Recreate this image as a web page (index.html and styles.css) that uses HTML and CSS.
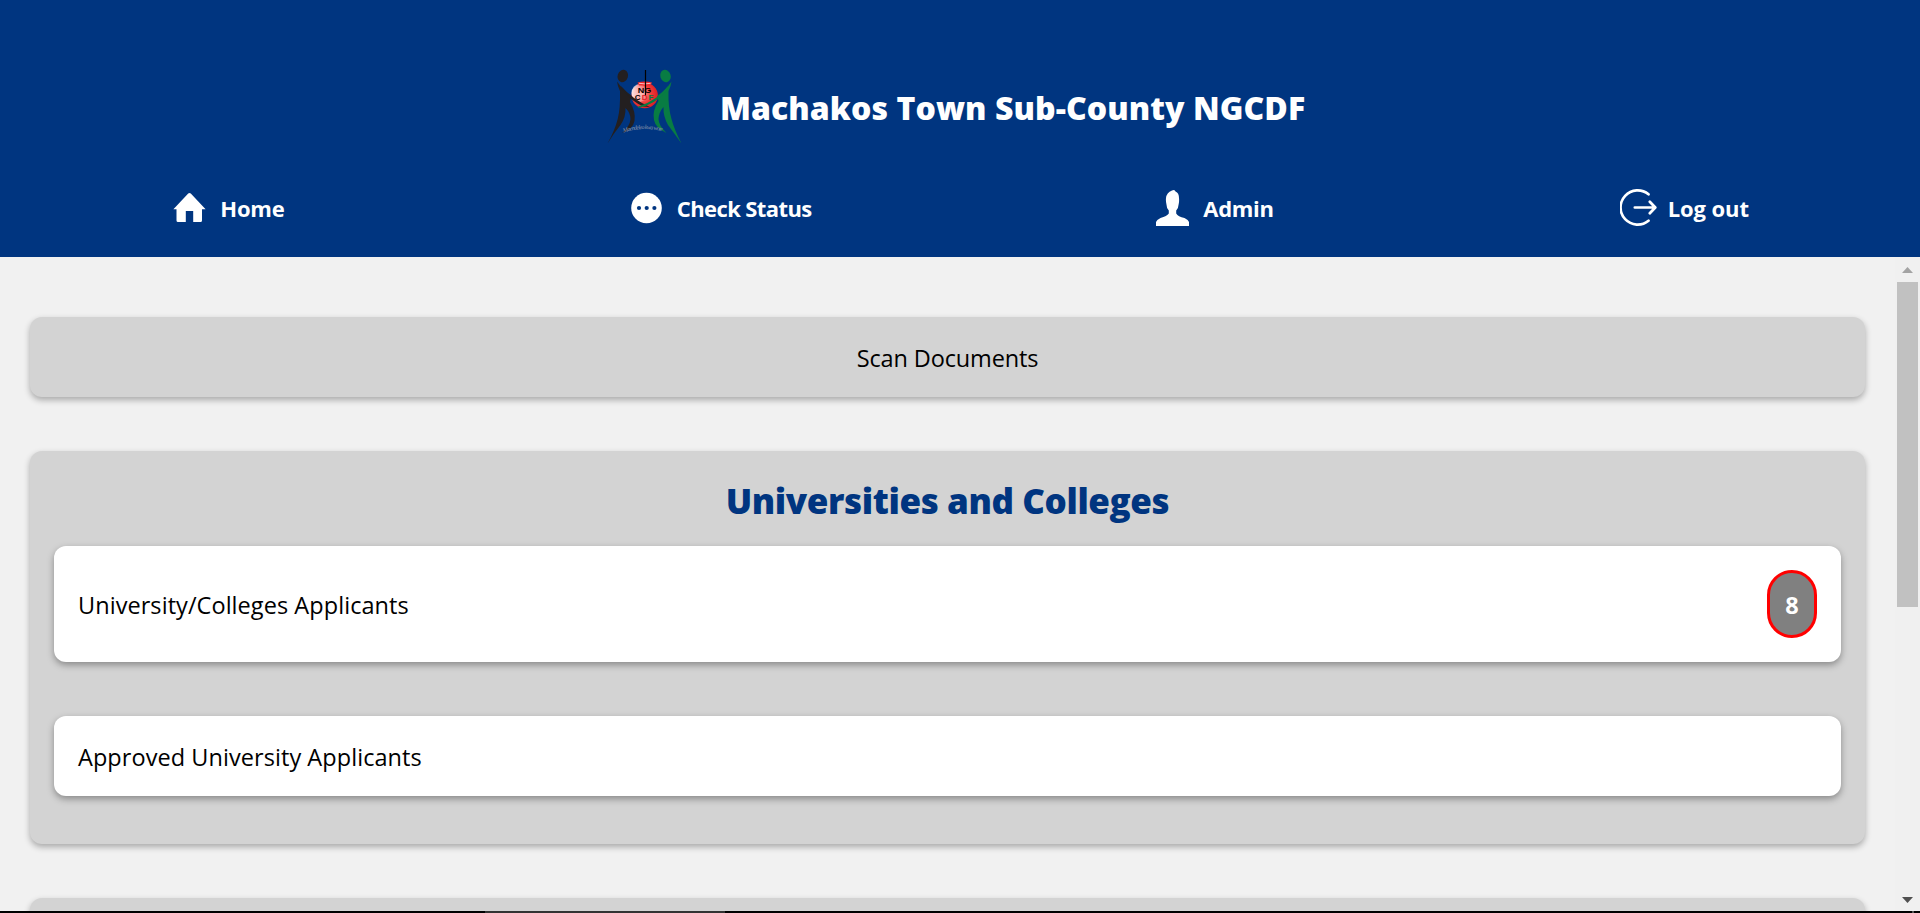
FILE: index.html
```html
<!DOCTYPE html>
<html lang="en">
<head>
<meta charset="utf-8">
<title>Machakos Town Sub-County NGCDF</title>
<link rel="stylesheet" href="styles.css">
</head>
<body>
<header class="header">
  <div class="brand">
    <svg class="logo" viewBox="0 0 120 110" aria-hidden="true">
      <defs>
        <radialGradient id="pot" cx=".4" cy=".45" r=".65">
          <stop offset="0" stop-color="#ff9a90"/><stop offset=".55" stop-color="#f03a38"/><stop offset="1" stop-color="#d81820"/>
        </radialGradient>
        <linearGradient id="shine"><stop offset="0" stop-color="#fff" stop-opacity=".9"/><stop offset="1" stop-color="#fff" stop-opacity="0"/></linearGradient>
      </defs>
      <ellipse cx="54.7" cy="45.5" rx="13.2" ry="12.8" fill="url(#pot)"/>
      <ellipse cx="49.5" cy="43" rx="8" ry="9" fill="url(#shine)"/>
      <path d="M47.5 32.5q7-2 14.500 0l-1.500 3h-11.500z" fill="#ef2a2c"/>
      <path d="M49 33.300q6 1.200 11.500 0" stroke="#fff" stroke-width=".7" fill="none"/>
      <path d="M55.500 20v26" stroke="#000" stroke-width="1.200"/>
      <g fill="#231f20">
        <ellipse cx="32.800" cy="26" rx="5.200" ry="6.300" transform="rotate(18 32.800 26)"/>
        <path d="M27 31.500Q33 40 41.500 46L40 52Q46 62 44.500 71Q43 79 32 83Q40 76 40.500 69Q40.500 63 35.500 58Q36 67 30.500 75Q24 83 17.500 93.500Q25 80 27.700 69Q30.500 58 30 41Q27.500 36 27 31.500Z"/>
        <path d="M31 36Q42 49 60 57L53.500 56.500Q42 52 32 39Z"/>
      </g>
      <g fill="#087c43">
        <ellipse cx="75.500" cy="26" rx="5.200" ry="6.300" transform="rotate(-18 75.500 26)"/>
        <path d="M81.500 31.500Q76 40 67 46L68.500 51Q62 61 64 70Q65.500 78 76.500 83Q68.500 75 68.500 69Q69 62 73.500 57Q73 66 78 75Q84 83 91.500 93.500Q84 79 81.500 69Q78 57 78.500 41Q81 36 81.500 31.500Z"/>
        <path d="M78 36Q68 50 48.500 56.500L48 58Q65 55 77 40Z"/>
      </g>
      <g class="logo-letters">
        <text x="47.800" y="43.300" textLength="13.500" lengthAdjust="spacingAndGlyphs">NG</text>
        <text x="44.800" y="49.500">C</text>
        <text x="51.800" y="49.500" fill="#e4212b">D</text>
        <text x="58.600" y="49.500" fill="#087c43">F</text>
      </g>
      <path id="motto-line" d="M33.500 82.500Q53 76 73.500 81.500" fill="none"/>
      <text class="logo-motto"><textPath href="#motto-line" textLength="39.500">Maendeleo kwa wote</textPath></text>
    </svg>
    <h1 class="title">Machakos Town Sub-County NGCDF</h1>
  </div>
  <nav class="nav">
    <a class="nav-item nav-home"><svg class="icon" viewBox="0 0 33 36"><path d="M15.200 3.400q1.300-1 2.600 0L32.600 19.200H29V30.500q0 1.500-1.500 1.500H20.200V21H12.800V32H5q-1.500 0-1.500-1.500V19.200H.400Z" fill="#fff"/></svg><span>Home</span></a>
    <a class="nav-item nav-status"><svg class="icon" viewBox="0 0 33 36"><circle cx="16.500" cy="18" r="15.300" fill="#fff"/><circle class="dot" cx="9" cy="18" r="2.100"/><circle class="dot" cx="16.700" cy="18" r="2.100"/><circle class="dot" cx="24.400" cy="18" r="2.100"/></svg><span>Check Status</span></a>
    <a class="nav-item nav-admin"><svg class="icon" viewBox="0 0 33 36"><path d="M0 36V32Q.500 29.800 4.500 28Q11 26 12.800 23.500V20.500Q10.500 18 10.300 13.500Q9.700 11 10 8Q10.500 2.800 16 .500Q19-.700 19.500 1.600Q23 3 23 8Q23.300 11 22.800 13.500Q22.500 18 20.200 20.500V23.500Q22 26.500 28.500 28Q32.500 29.800 33 32V36Z" fill="#fff"/></svg><span>Admin</span></a>
    <a class="nav-item nav-logout"><svg class="icon icon-wide" viewBox="0 0 37 37"><path d="M28.500 5.300A17.100 17.100 0 1 0 28.500 31.700M14.800 18.500H35M29.800 12.700L35.300 18.500L29.800 24.300" fill="none" stroke="#fff" stroke-width="2.700" stroke-linecap="round" stroke-linejoin="round"/></svg><span>Log out</span></a>
  </nav>
</header>
<div class="viewport">
  <main class="content">
    <section class="card scan"><span class="scan-label">Scan Documents</span></section>
    <section class="card group">
      <h2 class="group-title">Universities and Colleges</h2>
      <div class="row row-tall"><span class="row-label">University/Colleges Applicants</span><span class="badge">8</span></div>
      <div class="row"><span class="row-label">Approved University Applicants</span></div>
    </section>
    <section class="card next"></section>
  </main>
  <div class="scrollbar">
    <svg class="arrow" viewBox="0 0 11 6"><path d="M5.500 0L11 6H0Z" fill="#a3a3a3"/></svg>
    <div class="thumb"></div>
    <svg class="arrow arrow-down" viewBox="0 0 11 6"><path d="M0 0H11L5.500 6Z" fill="#505050"/></svg>
  </div>
</div>
<footer class="taskbar"><div class="taskbar-active"></div><div class="taskbar-mark"></div></footer>
</body>
</html>
```
FILE: styles.css
```css
* { box-sizing: border-box; }
body {
  margin: 0;
  height: 913px;
  overflow: hidden;
  display: flex;
  flex-direction: column;
  background: #f1f1f1;
  color: #000;
  font-family: "Segoe UI", "Open Sans", "Noto Sans", sans-serif;
}
.header {
  flex: none;
  height: 257px;
  background: #003580;
  color: #fff;
}
.brand {
  height: 160px;
  padding: 50px 0 0 590px;
  display: flex;
}
.logo { width: 120px; height: 110px; }
.logo-letters { font: bold 8px "Liberation Sans", sans-serif; }
.logo-motto { font: italic 6px "Liberation Serif", serif; fill: #8d98aa; }
.title {
  margin: 36px 0 0 10px;
  font-size: 32px;
  line-height: 44px;
  font-weight: 800;
  letter-spacing: 0.07px;
  white-space: nowrap;
}
.nav {
  display: flex;
  justify-content: space-around;
  align-items: center;
  height: 95px;
}
.nav-item {
  display: flex;
  align-items: center;
  gap: 14px;
  height: 40px;
  font-size: 22px;
  font-weight: 700;
  line-height: 40px;
  white-space: nowrap;
}
.nav-home { width: 110px; letter-spacing: -0.2px; }
.nav-status { width: 180px; letter-spacing: -0.6px; }
.nav-admin { width: 117px; letter-spacing: -0.3px; }
.nav-logout { width: 127px; gap: 11px; letter-spacing: -0.1px; }
.icon { flex: none; width: 33px; height: 36px; }
.icon-wide { width: 37px; height: 37px; }
.dot { fill: #003580; }
.viewport {
  flex: 1;
  min-height: 0;
  display: flex;
}
.content {
  flex: 1;
  overflow: hidden;
  padding: 60px 30px 0;
  display: flex;
  flex-direction: column;
  gap: 54px;
}
.card {
  flex: none;
  background: #d3d3d3;
  border-radius: 12px;
  box-shadow: 0 3px 6px rgba(0, 0, 0, .3);
}
.scan {
  height: 80px;
  padding-top: 2px;
  display: flex;
  align-items: center;
  justify-content: center;
  font-size: 23.500px;
  letter-spacing: -0.13px;
}
.group {
  height: 393px;
  padding: 26px 24px 0;
  display: flex;
  flex-direction: column;
}
.group-title {
  margin: 0 0 21px;
  height: 48px;
  text-align: center;
  color: #003580;
  font-size: 35px;
  line-height: 48px;
  font-weight: 800;
  letter-spacing: -0.4px;
}
.row {
  height: 80px;
  padding: 0 24px;
  display: flex;
  align-items: center;
  justify-content: space-between;
  background: #fff;
  border-radius: 12px;
  box-shadow: 0 3px 7px rgba(0, 0, 0, .35);
  font-size: 23.500px;
}
.row-label { padding-top: 2px; letter-spacing: 0.06px; }
.row-tall { height: 116px; margin-bottom: 54px; }
.badge {
  width: 50px;
  height: 68px;
  border: 3px solid #f00;
  border-radius: 25px;
  background: #808080;
  color: #fff;
  font-weight: 700;
  text-align: center;
  line-height: 64px;
}
.next { height: 80px; }
.scrollbar {
  width: 25px;
  padding: 10px 2px 8px;
  display: flex;
  flex-direction: column;
  align-items: center;
  background: #f0f0f0;
}
.arrow { flex: none; width: 11px; height: 6px; }
.arrow-down { margin-top: auto; }
.thumb {
  flex: none;
  width: 21px;
  height: 325px;
  margin-top: 9px;
  background: #c1c1c1;
}
.taskbar {
  flex: none;
  display: flex;
  height: 2px;
  background: #000;
}
.taskbar-active { width: 240px; margin-left: 485px; background: #333; }
.taskbar-mark { width: 2px; margin-left: 1187px; background: #555; }
```
